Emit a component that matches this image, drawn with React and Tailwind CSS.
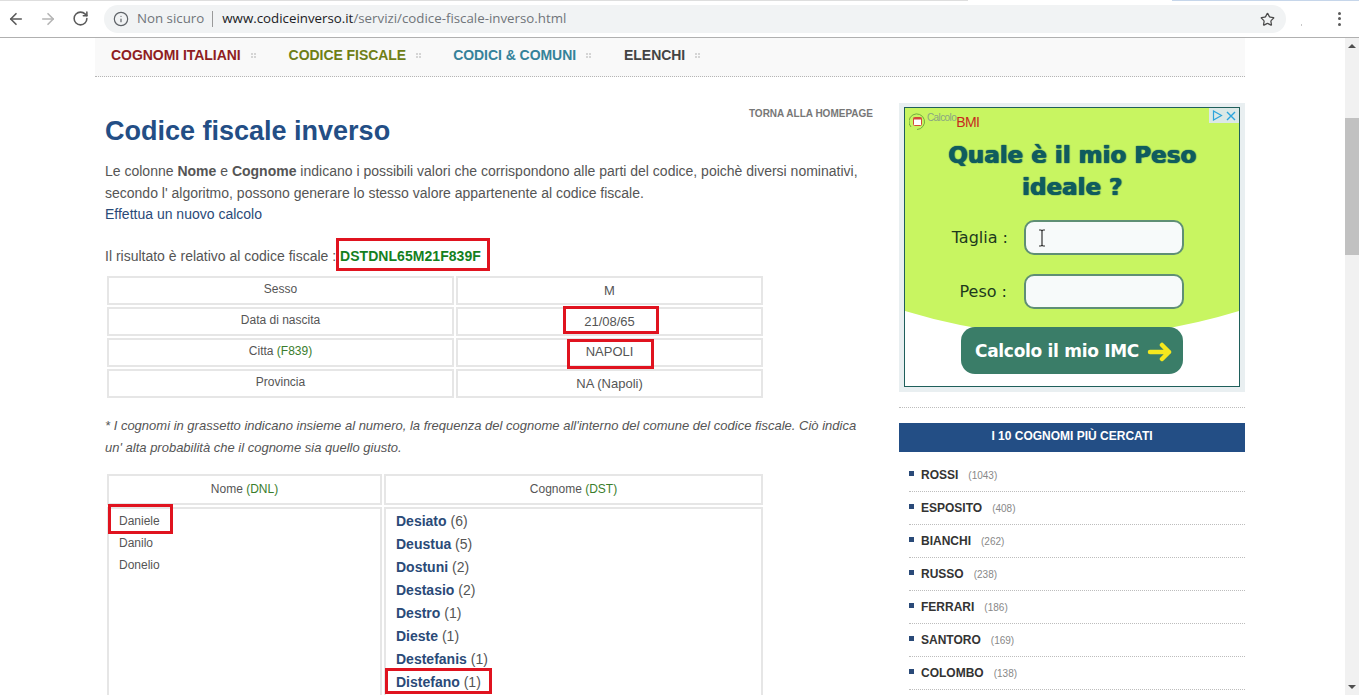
import React from 'react'
import { ArrowLeft, ArrowRight, RotateCw, Info, Star } from 'lucide-react'

const navItems = [
  { label: 'COGNOMI ITALIANI', color: 'text-[#8f1d22]', margin: 'mr-[33px]' },
  { label: 'CODICE FISCALE', color: 'text-[#6f7f16]', margin: 'mr-[32px]' },
  { label: 'CODICI & COMUNI', color: 'text-[#35829a]', margin: 'mr-[33px]' },
  { label: 'ELENCHI', color: 'text-[#444444]', margin: '' },
]

const surnames = [
  ['Desiato', 6],
  ['Deustua', 5],
  ['Dostuni', 2],
  ['Destasio', 2],
  ['Destro', 1],
  ['Dieste', 1],
  ['Destefanis', 1],
  ['Distefano', 1],
]

const topSearched = [
  ['ROSSI', 1043],
  ['ESPOSITO', 408],
  ['BIANCHI', 262],
  ['RUSSO', 238],
  ['FERRARI', 186],
  ['SANTORO', 169],
  ['COLOMBO', 138],
]

const Dots = () => (
  <span className="ml-[10px] grid grid-cols-2 gap-[1px] w-[5px]">
    <i className="w-[2px] h-[2px] bg-[#d5d5d5]" />
    <i className="w-[2px] h-[2px] bg-[#d5d5d5]" />
    <i className="w-[2px] h-[2px] bg-[#d5d5d5]" />
    <i className="w-[2px] h-[2px] bg-[#d5d5d5]" />
  </span>
)

const RedBox = ({ className }) => (
  <span className={`absolute border-[3px] border-[#e0131f] pointer-events-none ${className}`} />
)

const BrowserBar = () => (
  <div className="h-[38px] shrink-0 flex items-center bg-white border-b border-[#b0b0b0] relative">
    <div className="absolute top-0 left-0 w-[968px] h-px bg-[#dedede]" />
    <div className="absolute top-0 left-[1172px] w-[187px] h-px bg-[#c6d6ea]" />
    <ArrowLeft className="ml-[7px] w-[18px] h-[18px] text-[#5a5a5a]" strokeWidth={2.2} />
    <ArrowRight className="ml-[14px] w-[18px] h-[18px] text-[#b5b5b5]" strokeWidth={2.2} />
    <RotateCw className="ml-[15px] w-[17px] h-[17px] text-[#5a5a5a]" strokeWidth={2.2} />
    <div className="ml-[15px] mt-[1px] w-[1182px] h-[28px] rounded-full bg-[#f1f3f4] flex items-center font-['Open_Sans',sans-serif] text-[13.3px]">
      <Info className="ml-[9px] w-[16px] h-[16px] text-[#5f6368]" strokeWidth={1.8} />
      <span className="ml-[8px] text-[#70757a]">Non sicuro</span>
      <span className="ml-[8px] w-px h-[16px] bg-[#9a9a9a]" />
      <span className="ml-[9px] text-[#202124]">www.codiceinverso.it</span>
      <span className="text-[#70757a]">/servizi/codice-fiscale-inverso.html</span>
      <Star className="ml-auto mr-[11px] w-[15px] h-[15px] text-[#4a4a4a]" strokeWidth={2} />
    </div>
    <span className="absolute left-[1301px] top-[24px] w-px h-[2px] bg-[#c8c8c8]" />
    <span className="ml-[52px] flex flex-col gap-[2.5px]">
      <i className="w-[3px] h-[3px] rounded-full bg-[#5a5a5a]" />
      <i className="w-[3px] h-[3px] rounded-full bg-[#5a5a5a]" />
      <i className="w-[3px] h-[3px] rounded-full bg-[#5a5a5a]" />
    </span>
  </div>
)

const Nav = () => (
  <div className="h-[39px] bg-[#f9f9f9] border-b border-dotted border-[#b5b5b5] flex items-start pt-[7px] pl-[16px] text-[14px] font-bold">
    {navItems.map((item) => (
      <span key={item.label} className={`flex items-center ${item.margin}`}>
        <span className={`${item.color} tracking-[-0.05px]`}>{item.label}</span>
        <Dots />
      </span>
    ))}
  </div>
)

const Cell = ({ children, className = '' }) => (
  <div className={`relative border-2 border-[#e6e6e6] text-center ${className}`}>{children}</div>
)

const InfoTable = () => (
  <div className="ml-[2px] mt-[6px] grid grid-cols-[347px_307px] gap-x-[2px] gap-y-[2px] w-[656px] text-[12px] text-[#555]">
    <Cell className="h-[29px] pt-[2px]">Sesso</Cell>
    <Cell className="h-[29px] pt-[3px] text-[13px]">M</Cell>
    <Cell className="h-[29px] pt-[2px]">Data di nascita</Cell>
    <Cell className="h-[29px] pt-[3px] text-[13px]">
      21/08/65
      <RedBox className="left-[105px] -top-[3px] w-[96px] h-[28px]" />
    </Cell>
    <Cell className="h-[29px] pt-[2px]">
      Citta <span className="text-[#3a7d2c]">(F839)</span>
    </Cell>
    <Cell className="h-[29px] pt-[2px] text-[13px]">
      NAPOLI
      <RedBox className="left-[109px] -top-[1px] w-[87px] h-[30px]" />
    </Cell>
    <Cell className="h-[29px] pt-[2px]">Provincia</Cell>
    <Cell className="h-[29px] pt-[3px] text-[13px]">NA (Napoli)</Cell>
  </div>
)

const NamesTable = () => (
  <div className="ml-[2px] mt-[15px] grid grid-cols-[275px_379px] gap-[2px] w-[656px] text-[12px] text-[#555]">
    <Cell className="h-[31px] pt-[4px]">
      Nome <span className="text-[#3a7d2c]">(DNL)</span>
    </Cell>
    <Cell className="h-[31px] pt-[4px]">
      Cognome <span className="text-[#3a7d2c]">(DST)</span>
    </Cell>
    <div className="relative border-2 border-b-0 border-[#e6e6e6] h-[200px] pl-[10px] pt-[3px]">
      <div className="h-[22px] leading-[18px]">Daniele</div>
      <div className="h-[22px] leading-[18px]">Danilo</div>
      <div className="h-[22px] leading-[18px]">Donelio</div>
      <RedBox className="-left-[1px] -top-[5px] w-[65px] h-[30px]" />
    </div>
    <div className="relative border-2 border-b-0 border-[#e6e6e6] h-[200px] pl-[10px] pt-[1px] text-[14px]">
      {surnames.map(([name, count]) => (
        <div key={name} className="h-[23px] leading-[22px]">
          <b className="text-[#2a4a78]">{name}</b> ({count})
        </div>
      ))}
      <RedBox className="-left-[1px] top-[159px] w-[107px] h-[26px]" />
    </div>
  </div>
)

const Ad = () => (
  <div className="h-[289px] bg-[#e9eff1] pt-[4px] px-[5px]">
    <div className="relative h-[280px] border border-[#1f5f5b] bg-white overflow-hidden font-['Open_Sans',sans-serif]">
      <svg className="absolute inset-0 w-full h-full" viewBox="0 0 335 278" preserveAspectRatio="none">
        <path d="M0 203V0H335V203Q168 254 0 203Z" fill="#c8f561" />
      </svg>
      <div className="absolute top-0 right-0 w-[30px] h-[15px] bg-[#dbe8e6] flex items-center justify-center gap-[3px]">
        <svg width="11" height="11" viewBox="0 0 11 11" fill="none" stroke="#2ba4dc" strokeWidth="1.2">
          <path d="M1.5 1v9l8-4.5z" />
        </svg>
        <svg width="10" height="10" viewBox="0 0 10 10" fill="none" stroke="#2ba4dc" strokeWidth="1.4">
          <path d="M1 1l8 8M9 1l-8 8" />
        </svg>
      </div>
      <div className="relative flex flex-col">
        <div className="h-[29px] pl-[4px] pt-[4px] flex items-start">
          <svg width="17" height="17" viewBox="0 0 17 17" fill="none" className="mt-[1px]">
            <path d="M2 14A7.8 7.8 0 1 1 8 16.5" stroke="#6fae3f" strokeWidth="1" />
            <rect x="4.5" y="4.5" width="8" height="8" rx="1" fill="#fff" stroke="#d24a3a" strokeWidth="1" />
            <path d="M4.5 5.5h8" stroke="#d24a3a" strokeWidth="2" />
          </svg>
          <span className="ml-[1px] text-[10px] leading-[12px] text-[#8aa582] tracking-[-0.6px] font-['Liberation_Sans',sans-serif]">Calcolo</span>
          <span className="text-[14px] leading-[16px] mt-[2px] tracking-[-0.6px] text-[#c72a1e] font-['Liberation_Sans',sans-serif]">BMI</span>
        </div>
        <div className="text-center text-[#0f5c5e] font-bold font-['DejaVu_Sans',sans-serif] text-[23px] leading-[32px] mt-[2px] [text-shadow:0_0_1px_#0f5c5e,1px_0_1px_#0f5c5e]">
          Quale è il mio Peso
          <br />
          ideale ?
        </div>
        <div className="flex items-center mt-[17px] h-[35px] font-['DejaVu_Sans',sans-serif] text-[16px] text-[#1d3a1d]">
          <span className="w-[103px] text-right">Taglia :</span>
          <span className="ml-[16px] w-[160px] h-[35px] rounded-[10px] border-2 border-[#5f8f75] bg-[#f7fafa] flex items-center pl-[11px]">
            <svg width="10" height="18" viewBox="0 0 10 18" fill="none" stroke="#333" strokeWidth="1.2">
              <path d="M2 1h2l1 1 1-1h2M5 2v14M2 17h2l1-1 1 1h2" />
            </svg>
          </span>
        </div>
        <div className="flex items-center mt-[19px] h-[35px] font-['DejaVu_Sans',sans-serif] text-[16px] text-[#1d3a1d]">
          <span className="w-[102px] text-right pt-[1px]">Peso :</span>
          <span className="ml-[17px] w-[160px] h-[35px] rounded-[10px] border-2 border-[#5f8f75] bg-[#f7fafa]" />
        </div>
        <div className="ml-[56px] mt-[18px] w-[222px] h-[47px] rounded-[14px] bg-[#3a7d68] flex items-center pl-[14px] pt-[2px] text-white font-bold font-['DejaVu_Sans',sans-serif] text-[17px] tracking-[-0.3px]">
          Calcolo il mio IMC
          <svg width="26" height="20" viewBox="0 0 26 20" fill="none" className="ml-[8px]" stroke="#f5e81e" strokeWidth="4.5" strokeLinecap="round" strokeLinejoin="round">
            <path d="M3 10h19M15 3l7 7-7 7" />
          </svg>
        </div>
      </div>
    </div>
  </div>
)

const Sidebar = () => (
  <div className="w-[346px] shrink-0 pt-[26px]">
    <Ad />
    <div className="mt-[15px] border-b border-dotted border-[#bdbdbd]" />
    <div className="mt-[15px] h-[29px] bg-[#234e85] text-white text-[12px] font-bold text-center leading-[26px]">
      I 10 COGNOMI PIÙ CERCATI
    </div>
    <ul className="mt-[7px] ml-[10px]">
      {topSearched.map(([name, count]) => (
        <li key={name} className="h-[33px] border-b border-dotted border-[#bdbdbd] flex items-center pl-[12px] relative">
          <span className="absolute left-0 top-[12px] w-[5px] h-[5px] bg-[#2a4a78]" />
          <span className="text-[12px] font-bold text-[#333]">{name}</span>
          <span className="ml-[10px] text-[10px] text-[#888]">({count})</span>
        </li>
      ))}
    </ul>
  </div>
)

export default function App() {
  return (
    <div className="h-[695px] w-[1359px] overflow-hidden flex flex-col bg-white font-['Liberation_Sans',Arial,sans-serif]">
      <BrowserBar />
      <div className="flex flex-1 min-h-0">
        <div className="w-[1345px] overflow-hidden">
          <div className="ml-[95px] w-[1150px]">
            <Nav />
            <div className="flex">
              <div className="w-[804px] shrink-0 pl-[10px] relative">
                <div className="absolute right-[26px] top-[29px] text-[10px] font-bold text-[#777]">TORNA ALLA HOMEPAGE</div>
                <h1 className="mt-[38px] text-[27px] leading-[32px] font-bold text-[#234e85]">Codice fiscale inverso</h1>
                <p className="mt-[14px] w-[765px] text-[14px] leading-[21.5px] text-[#555]">
                  Le colonne <b>Nome</b> e <b>Cognome</b> indicano i possibili valori che corrispondono alle parti del codice, poichè diversi nominativi, secondo l' algoritmo, possono generare lo stesso valore appartenente al codice fiscale.
                  <br />
                  <span className="text-[#2a4a78]">Effettua un nuovo calcolo</span>
                </p>
                <div className="mt-[17.5px] h-[27px] relative text-[14px] leading-[27px] text-[#555]">
                  Il risultato è relativo al codice fiscale : <b className="text-[#14801e] tracking-[0.05px]">DSTDNL65M21F839F</b>
                  <RedBox className="left-[231px] -top-[5px] w-[154px] h-[33px]" />
                </div>
                <InfoTable />
                <p className="mt-[17px] w-[765px] text-[13px] leading-[22px] italic text-[#555]">
                  * I cognomi in grassetto indicano insieme al numero, la frequenza del cognome all'interno del comune del codice fiscale. Ciò indica un' alta probabilità che il cognome sia quello giusto.
                </p>
                <NamesTable />
              </div>
              <Sidebar />
            </div>
          </div>
        </div>
        <div className="w-[14px] bg-[#f1f1f1] flex flex-col items-center relative">
          <span className="mt-[6px] border-x-[4px] border-x-transparent border-b-[4px] border-b-[#505050]" />
          <span className="mt-[70px] w-full h-[137px] bg-[#c1c1c1]" />
          <span className="mt-auto mb-[6px] border-x-[4px] border-x-transparent border-t-[4px] border-t-[#505050]" />
        </div>
      </div>
    </div>
  )
}
